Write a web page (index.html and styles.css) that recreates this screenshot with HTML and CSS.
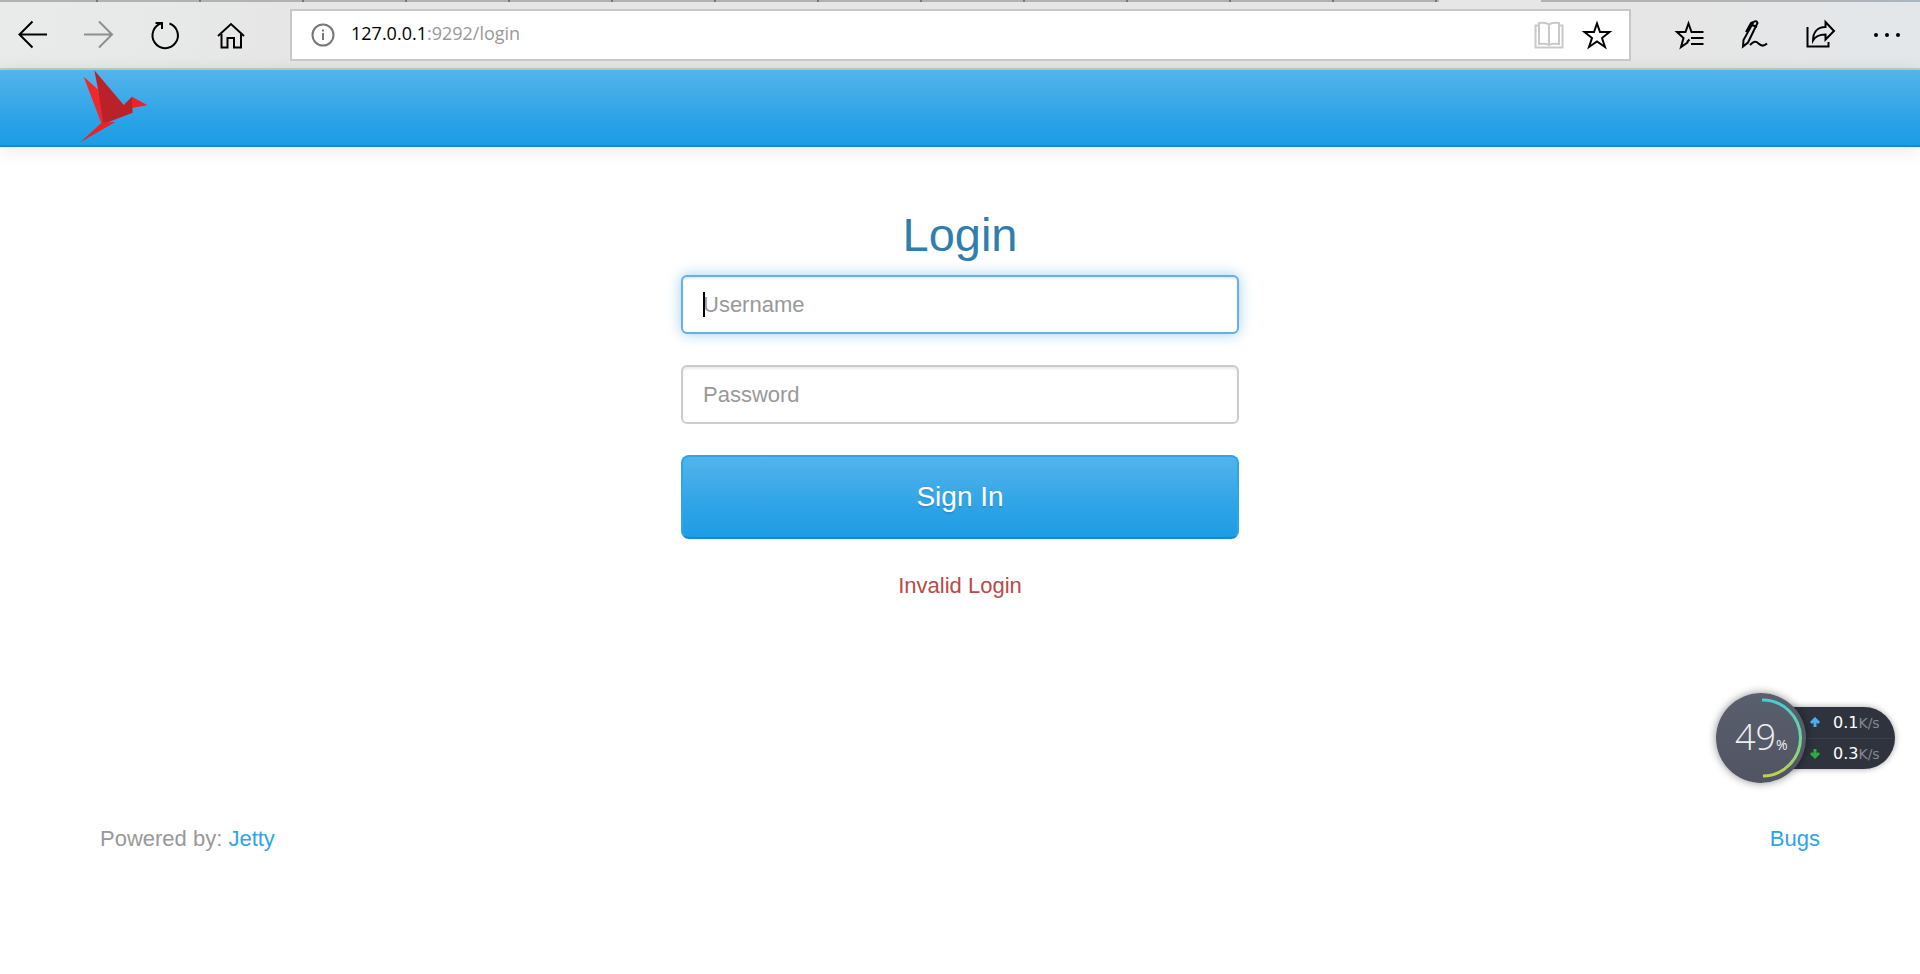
FILE: index.html
```html
<!DOCTYPE html>
<html lang="en">
<head>
<meta charset="utf-8">
<title>Login</title>
<link rel="stylesheet" href="styles.css">
</head>
<body>
<div class="browser">
  <div class="tabstrip"><span class="tabs"></span><span class="tab-active"></span><span class="tab-rest"></span></div>
  <div class="toolbar">
    <button class="tool" type="button" aria-label="Back"><svg width="32" height="32" viewBox="0 0 32 32"><path d="M30 16.500H3M15.500 3.500L2.500 16.500l13 13"/></svg></button>
    <button class="tool disabled" type="button" aria-label="Forward"><svg width="32" height="32" viewBox="0 0 32 32"><path d="M1 16.500h28M16 3.500l13 13-13 13"/></svg></button>
    <button class="tool" type="button" aria-label="Refresh"><svg width="32" height="32" viewBox="0 0 32 32"><path d="M20.500 5.500a12.700 12.700 0 1 1-8-.2M6.500 5H13v6"/></svg></button>
    <button class="tool" type="button" aria-label="Home"><svg width="32" height="32" viewBox="0 0 32 32"><path d="M3 18L16 6l13 12M6.500 16v13.500H12.500V20h6.500v9.500H26V16"/></svg></button>
    <div class="address">
      <svg class="info" width="24" height="24" viewBox="0 0 24 24"><circle cx="12" cy="12" r="10.500"/><path d="M12 10v7M12 6.500v2"/></svg>
      <span class="url"><span class="host">127.0.0.1</span>:9292/login</span>
      <button class="tool small book" type="button" aria-label="Reading view"><svg width="32" height="32" viewBox="0 0 32 32"><path d="M16 6.500c-2.500-2-7-2-10-1.500v21c3.500-.5 7.500-.5 10 1 2.500-1.500 6.500-1.500 10-1V5c-3-.5-7.500-.5-10 1.500zV27M6 7.500H2.500v22h27v-22H26"/></svg></button>
      <button class="tool small" type="button" aria-label="Favourite"><svg width="32" height="32" viewBox="0 0 32 32"><path d="M16 5.500l3 8.500h9.500l-7.500 6 3 9-8-5.500L8 29l3-9-7.500-6H13z"/></svg></button>
    </div>
    <button class="tool" type="button" aria-label="Hub"><svg width="32" height="32" viewBox="0 0 32 32"><path d="M30.500 14H18.500L15.500 5.500l-3 8.500H4l6.500 6L8 29l6.500-4.500v-1l2-2M18 20h12.500M18 26h12.500"/></svg></button>
    <button class="tool" type="button" aria-label="Notes"><svg width="32" height="32" viewBox="0 0 32 32"><path d="M4 28.500L4.500 22 14.500 4q3-2 4 1L9 24.500zM14.500 4L12 5 7 14M13 7l5 2M11 27c4-4 6-4 8.500-1.500 3 3 6 2.500 8.500 0"/></svg></button>
    <button class="tool" type="button" aria-label="Share"><svg width="32" height="32" viewBox="0 0 32 32"><path d="M2.500 9v19.500h21V24M20.500 4l8.500 9-8.500 8.500v-5C14 16.500 10.500 18 8 22.500 8 14 12.500 9 20.500 9z"/></svg></button>
    <button class="tool" type="button" aria-label="More"><svg width="32" height="32" viewBox="0 0 32 32"><g class="dots"><circle cx="5" cy="17" r="2"/><circle cx="16" cy="17" r="2"/><circle cx="27" cy="17" r="2"/></g></svg></button>
  </div>
</div>
<header class="navbar">
  <a class="brand" href="#" aria-label="Home"><svg width="68" height="73" viewBox="0 0 204 219"><path fill="#f0282c" d="M11 20l42 38 30 100-18 4z"/><path fill="#ba2129" d="M43 1l88 104 25-25 2 48-88 34-15-100z"/><path fill="#ee2224" d="M156 80l46 26-46 8zM65 158l42-3L1 217z"/></svg></a>
</header>
<main class="main">
  <form class="login">
    <h1 class="title">Login</h1>
    <div class="focus-wrap"><input class="field active" type="text" placeholder="Username" aria-label="Username"><span class="caret"></span></div>
    <input class="field" type="password" placeholder="Password" aria-label="Password">
    <button class="submit" type="button">Sign In</button>
    <p class="error">Invalid Login</p>
  </form>
</main>
<footer class="footer"><span>Powered by: <a href="#">Jetty</a></span><a href="#">Bugs</a></footer>
<aside class="monitor">
  <div class="disc"><svg class="ring" width="90" height="90" viewBox="0 0 90 90"><defs><linearGradient id="g" x1="0" y1="0" x2="0" y2="1"><stop offset="0" stop-color="#45cfd0"/><stop offset=".5" stop-color="#70d3a0"/><stop offset="1" stop-color="#c3cf4c"/></linearGradient></defs><path stroke="url(#g)" d="M46 7a38 38 0 0 1 1 76"/></svg><span class="percent">49</span><span class="sign">%</span></div>
  <div class="rates">
    <div class="rate"><svg class="up" width="12" height="12" viewBox="0 0 12 12"><path d="M6 10V2M2 6l4-4 4 4"/></svg><span><b>0.1</b>K/s</span></div>
    <div class="rate"><svg class="down" width="12" height="12" viewBox="0 0 12 12"><path d="M6 1v8M2 5l4 4 4-4"/></svg><span><b>0.3</b>K/s</span></div>
  </div>
</aside>
</body>
</html>
```
FILE: styles.css
```css
* { box-sizing: border-box; }
body { margin: 0; background: #fff; font-family: "Liberation Sans", Arial, sans-serif; font-size: 22px; line-height: 32px; color: #999; }
a { color: #2fa4e7; text-decoration: none; }
button, input { font-family: inherit; }
svg { display: block; fill: none; }

.browser { background: linear-gradient(90deg, #e9ebeb, #e6e6e6 16%, #e6e6e6 88%, #e3e7ea); border-bottom: 2px solid #c8c8c8; }
.tabstrip { display: flex; height: 2px; }
.tabs { flex: 1439; background: repeating-linear-gradient(90deg, #b2b2b2 0 96px, #777 96px 98px, #b2b2b2 98px 103px); }
.tab-active { flex: 102; }
.tab-rest { flex: 379; background: linear-gradient(90deg, #b2b2b2 70%, #a9b7c2); }
.toolbar { display: flex; align-items: center; height: 66px; }
.tool { flex: none; display: flex; align-items: center; justify-content: center; width: 66px; height: 48px; padding: 0 0 2px; border: 0; background: none; color: #000; }
.tool svg { stroke: currentColor; stroke-width: 2; }
.tool.disabled { color: #8e8e8e; }
.tool.small { width: 48px; }
.tool.book { color: #c9c9c9; }
.dots { fill: #000; stroke: none; }
.address { flex: 1; display: flex; align-items: center; height: 52px; margin: 0 25px 0 26px; padding: 0 8px 0 19px; border: 2px solid #c8c8c8; background: #fff; }
.info { stroke: #777; stroke-width: 2; }
.url { flex: 1; padding: 0 0 4px 16px; font: 18px/24px "Open Sans", "Noto Sans", sans-serif; color: #999; }
.host { color: #000; }

.navbar { display: flex; height: 77px; padding: 0 80px; background: linear-gradient(#54b4eb, #2fa4e7 60%, #1d9ce5); border-bottom: 2px solid #178acc; box-shadow: 0 2px 18px rgba(0, 0, 0, .1); }
.brand { display: block; }

.main { display: flex; justify-content: center; padding-top: 58px; }
.login { display: flex; flex-direction: column; width: 558px; }
.title { margin: 0 0 10px; font-size: 47px; line-height: 60px; font-weight: 400; text-align: center; color: #317eac; }
.focus-wrap { position: relative; }
.field { display: block; width: 100%; height: 59px; margin-bottom: 31px; padding: 0 20px; border: 2px solid #ccc; border-radius: 6px; outline: 0; background: #fff; font-size: 22px; color: #555; box-shadow: inset 0 2px 2px rgba(0, 0, 0, .08); }
.field::placeholder { color: #999; opacity: 1; }
.field.active { border-color: #66afe9; box-shadow: inset 0 2px 2px rgba(0, 0, 0, .08), 0 0 14px rgba(102, 175, 233, .6); }
.caret { position: absolute; left: 22px; top: 17px; width: 2px; height: 25px; background: #000; }
.submit { height: 84px; padding: 0; border: 2px solid #2fa4e7; border-bottom-color: #178acc; border-radius: 8px; background: linear-gradient(#54b4eb, #2fa4e7 60%, #1d9ce5); font-size: 28px; color: #fff; text-shadow: 0 2px 1px rgba(0, 0, 0, .1); }
.error { margin: 31px 0 0; text-align: center; color: #b94a48; }
.footer { display: flex; justify-content: space-between; margin-top: 221px; padding: 0 100px; }

.monitor { position: absolute; right: 25px; top: 693px; display: flex; align-items: center; font-family: "DejaVu Sans", sans-serif; }
.disc { position: relative; z-index: 1; display: flex; align-items: center; width: 90px; height: 90px; padding-left: 19px; border-radius: 50%; background: linear-gradient(#5a5f6e, #505463); box-shadow: 0 0 8px rgba(0, 0, 0, .45); color: #eee; }
.ring { position: absolute; left: 0; top: 0; stroke-width: 3; }
.percent { padding-bottom: 2px; font: 300 36px/40px "Open Sans", "Noto Sans", sans-serif; }
.sign { padding-top: 14px; font: 14px/20px "Open Sans", sans-serif; }
.rates { width: 106px; margin-left: -17px; border-radius: 0 31px 31px 0; background: #2f333d; box-shadow: 0 0 6px rgba(0, 0, 0, .35); }
.rate { display: flex; align-items: center; gap: 12px; height: 31px; padding-left: 20px; font-size: 14px; line-height: 20px; color: #858991; }
.rate + .rate { border-top: 1px solid #3c404a; }
.rate b { font-weight: 400; font-size: 16px; color: #fff; }
.rate svg { flex: none; stroke-width: 3; }
.up { stroke: #46b1ee; }
.down { stroke: #2eaa40; }
```
